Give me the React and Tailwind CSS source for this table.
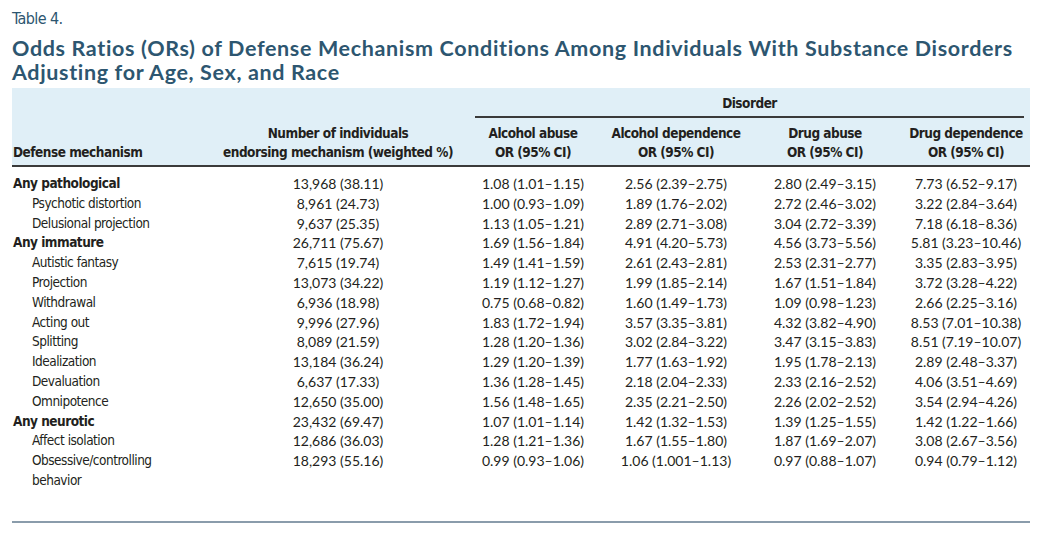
import React from "react"

const rows = [
  { label: "Any pathological", group: true, n: "13,968 (38.11)", v: ["1.08 (1.01–1.15)", "2.56 (2.39–2.75)", "2.80 (2.49–3.15)", "7.73 (6.52–9.17)"] },
  { label: "Psychotic distortion", n: "8,961 (24.73)", v: ["1.00 (0.93–1.09)", "1.89 (1.76–2.02)", "2.72 (2.46–3.02)", "3.22 (2.84–3.64)"] },
  { label: "Delusional projection", n: "9,637 (25.35)", v: ["1.13 (1.05–1.21)", "2.89 (2.71–3.08)", "3.04 (2.72–3.39)", "7.18 (6.18–8.36)"] },
  { label: "Any immature", group: true, n: "26,711 (75.67)", v: ["1.69 (1.56–1.84)", "4.91 (4.20–5.73)", "4.56 (3.73–5.56)", "5.81 (3.23–10.46)"] },
  { label: "Autistic fantasy", n: "7,615 (19.74)", v: ["1.49 (1.41–1.59)", "2.61 (2.43–2.81)", "2.53 (2.31–2.77)", "3.35 (2.83–3.95)"] },
  { label: "Projection", n: "13,073 (34.22)", v: ["1.19 (1.12–1.27)", "1.99 (1.85–2.14)", "1.67 (1.51–1.84)", "3.72 (3.28–4.22)"] },
  { label: "Withdrawal", n: "6,936 (18.98)", v: ["0.75 (0.68–0.82)", "1.60 (1.49–1.73)", "1.09 (0.98–1.23)", "2.66 (2.25–3.16)"] },
  { label: "Acting out", n: "9,996 (27.96)", v: ["1.83 (1.72–1.94)", "3.57 (3.35–3.81)", "4.32 (3.82–4.90)", "8.53 (7.01–10.38)"] },
  { label: "Splitting", n: "8,089 (21.59)", v: ["1.28 (1.20–1.36)", "3.02 (2.84–3.22)", "3.47 (3.15–3.83)", "8.51 (7.19–10.07)"] },
  { label: "Idealization", n: "13,184 (36.24)", v: ["1.29 (1.20–1.39)", "1.77 (1.63–1.92)", "1.95 (1.78–2.13)", "2.89 (2.48–3.37)"] },
  { label: "Devaluation", n: "6,637 (17.33)", v: ["1.36 (1.28–1.45)", "2.18 (2.04–2.33)", "2.33 (2.16–2.52)", "4.06 (3.51–4.69)"] },
  { label: "Omnipotence", n: "12,650 (35.00)", v: ["1.56 (1.48–1.65)", "2.35 (2.21–2.50)", "2.26 (2.02–2.52)", "3.54 (2.94–4.26)"] },
  { label: "Any neurotic", group: true, n: "23,432 (69.47)", v: ["1.07 (1.01–1.14)", "1.42 (1.32–1.53)", "1.39 (1.25–1.55)", "1.42 (1.22–1.66)"] },
  { label: "Affect isolation", n: "12,686 (36.03)", v: ["1.28 (1.21–1.36)", "1.67 (1.55–1.80)", "1.87 (1.69–2.07)", "3.08 (2.67–3.56)"] },
  { label: "Obsessive/controlling", n: "18,293 (55.16)", v: ["0.99 (0.93–1.06)", "1.06 (1.001–1.13)", "0.97 (0.88–1.07)", "0.94 (0.79–1.12)"] },
]

// condensed face for labels and headings
const cond = "font-['DejaVu_Sans_Condensed','DejaVu_Sans',sans-serif] [font-stretch:condensed]"
const num = "font-['Lato',sans-serif]"
const cols = "grid grid-cols-[202px_248px_142px_144px_154px_128px]"

const App = () => {
  return (
    <div className="w-[1042px] h-[534px] bg-white pl-3 pt-[8px] text-[#231f20]">
      <div className={`${cond} text-[16px] leading-[22px] tracking-[-0.6px] text-[#2d5670]`}>Table 4.</div>
      <h1 className="font-['Lato',sans-serif] font-bold text-[21.5px] leading-[24px] tracking-[0.65px] text-[#2d5670] mt-[6px]">
        Odds Ratios (ORs) of Defense Mechanism Conditions Among Individuals With Substance Disorders
        <br />
        Adjusting for Age, Sex, and Race
      </h1>

      {/* header */}
      <div className={`w-[1018px] mt-[4px] bg-[#e0eff7] border-b-2 border-[#3a3a3a] ${cond} font-bold text-[13.5px] tracking-[-0.5px] leading-[19px]`}>
        <div className="h-[30px] flex">
          <div className="w-[450px]" />
          <div className="flex-1 ml-[13px] mr-[6px] border-b-2 border-[#3a3a3a] text-center pt-[6px]">Disorder</div>
        </div>
        <div className={`${cols} pt-[6px] pb-[3px]`}>
          <div className="pt-[19px] pl-px">Defense mechanism</div>
          <div className="text-center">Number of individuals<br />endorsing mechanism (weighted %)</div>
          <div className="text-center">Alcohol abuse<br />OR (95% CI)</div>
          <div className="text-center">Alcohol dependence<br />OR (95% CI)</div>
          <div className="text-center">Drug abuse<br />OR (95% CI)</div>
          <div className="text-center">Drug dependence<br />OR (95% CI)</div>
        </div>
      </div>

      {/* body */}
      <div className="w-[1018px] pt-[7px] pb-[30px] border-b-2 border-[#8a9cab]">
        {rows.map((r, i) => (
          <div key={i} className={`${cols} text-[14px] leading-[19.8px]`}>
            <div className={`${cond} ${r.group ? "font-bold pl-px" : "pl-5"} text-[13.5px] tracking-[-0.5px]`}>{r.label}</div>
            <div className={`${num} text-center`}>{r.n}</div>
            {r.v.map((x, j) => (
              <div key={j} className={`${num} text-center`}>{x}</div>
            ))}
          </div>
        ))}
        <div className={`${cond} pl-5 text-[13.5px] tracking-[-0.5px] leading-[19.8px]`}>behavior</div>
      </div>
    </div>
  )
}

export default App
